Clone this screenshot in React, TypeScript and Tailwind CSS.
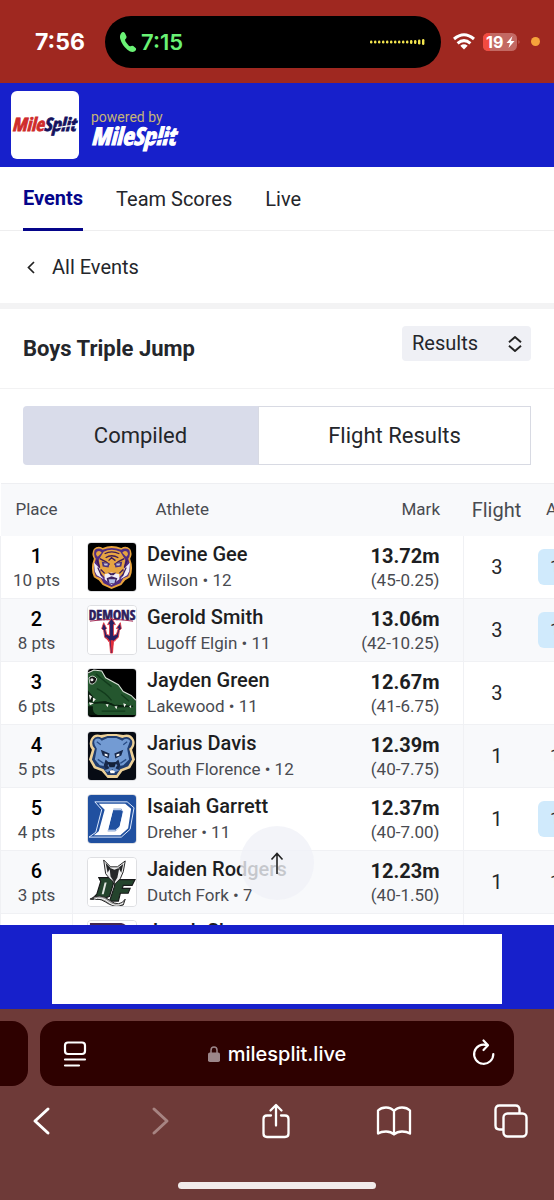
import type { ReactNode } from "react";

function SplitLogo({ size, w, h, left, right, cut, className }: { size: number; w: number; h: number; left: string; right: string; cut: string; className: string }) {
  return (
    <svg viewBox={`0 0 ${w} ${h}`} className={className} role="img" aria-label="MileSplit">
      <text x="0" y={size * 0.8} fontSize={size} fontWeight="700" fontStyle="italic" fontFamily="'Liberation Sans Narrow', 'Open Sans Condensed', Roboto, sans-serif" strokeWidth={size / 22}>
        <tspan fill={left} stroke={left}>Mile</tspan>
        <tspan fill={right} stroke={right}>Split</tspan>
      </text>
      <path d={`M${w * 0.66} ${size * 0.63} L${w * 0.86} ${size * 0.52} L${w} ${size * 0.5}`} stroke={cut} strokeWidth={size / 16} fill="none" />
    </svg>
  );
}

const Tiger = () => (
  <svg viewBox="0 0 49 49" className="size-full bg-black">
    <path d="M6 6Q10 2 15 5Q24 1 34 5Q39 2 43 6Q46 11 43 16Q47 26 43 35L38 38L34 43L24 47L15 43L11 38L6 35Q2 26 6 16Q3 11 6 6Z" fill="#e9a33c" />
    <path d="M7 7Q11 4 15 7Q24 3 34 7Q38 4 42 7Q44 12 41 16Q45 26 41 34L36 36L33 41L24 45L16 41L13 36L8 34Q4 26 8 16Q5 12 7 7Z" fill="#512d83" />
    <path d="M9 9Q12 7 14 10L10 14Q7 12 9 9ZM40 9Q37 7 35 10L39 14Q42 12 40 9ZM16 9Q24 5 33 9L38 17L36 31L31 36L24 40L18 36L13 31L11 17Z" fill="#e6a442" />
    <path d="M6 20L12 26L13 33L16 37L9 33L7 29ZM43 20L37 26L36 33L33 37L40 33L42 29ZM17 32L24 30L32 32L32 37L24 43L17 37Z" fill="#f2eef7" />
    <path d="M17 11Q24 7 32 11M18 15Q24 11 31 15M21 18L24 15L28 18M12 16L18 19L22 22M37 16L31 19L27 22M9 17L12 25M40 17L37 25M10 25L14 34M39 25L35 34M17 31L13 27M32 31L36 27" fill="none" stroke="#3d1a56" strokeWidth="1.3" />
    <path d="M14 19L22 21L21 25L15 24ZM35 19L27 21L28 25L34 24Z" fill="#49317c" />
    <path d="M16 21h4v2h-3zM33 21h-4v2h3z" fill="#c8c3d8" />
    <path d="M20 30L24 31L29 30L26 33H23Z" fill="#402462" />
    <path d="M19 36L24 34L30 36L28 41L24 42L20 40Z" fill="#402462" />
    <path d="M21 37h7l-1 4h-5z" fill="#b3c0e8" />
  </svg>
);

const Demons = () => (
  <svg viewBox="0 0 49 49" className="size-full bg-white">
    <text x="24.5" y="14" textAnchor="middle" fontSize="14" fontWeight="700" fontFamily="'Liberation Sans Narrow', 'Open Sans Condensed', Roboto, sans-serif" fill="#2d1c5c" stroke="#2d1c5c" strokeWidth=".6">DEMONS</text>
    <path d="M2 15.500Q24 12 46 15.500" stroke="#a32a55" fill="none" strokeWidth="1" />
    <path d="M24 12L28 19H26V30L29 29L31 23L29 23L33 17L34 23L32 25L31 32L26 36L25 48H23L22 36L17 32L16 25L14 23L16 17L19 23L18 24L19 29L22 30V19H20Z" fill="#252064" stroke="#e63a44" strokeWidth=".9" />
    <path d="M23 35h3l-1 12h-1zM18 31l4 4-1 2zM31 31l-4 4v2z" fill="#e52b38" />
  </svg>
);

const Gator = () => (
  <svg viewBox="0 0 49 49" className="size-full bg-black">
    <path d="M0 5L6 1L14 2L18 9L31 16L36 23L44 27L49 33V47H4L0 38Z" fill="#24562e" />
    <path d="M0 4L6 1L14 2L18 9L31 16L36 23L44 27L49 32" fill="none" stroke="#d9e1d8" strokeWidth="1.1" />
    <path d="M1 9Q5 5 9 10Q7 17 2 15Z" fill="#111" stroke="#cbd7cc" strokeWidth="1" />
    <circle cx="4" cy="11" r="1.6" fill="#eee" />
    <path d="M0 22L6 29L4 34L0 35ZM4 34L18 33L32 38L45 38M5 38Q4 45 10 47L0 47V38Z" fill="#081b0d" />
    <path d="M4 35L18 34L30 38.500L46 38" fill="none" stroke="#0b2412" strokeWidth="1.6" />
    <path d="M1 26l3 2-2 4zM5 29l3 2-3 3zM1 34l5 1-4 2zM18 36l2 3 1-3zM27 38l2 3 1-3zM36 35l1 4 2-3zM42 38l2 2v-3z" fill="#f4f4ef" />
    <path d="M8 5L14 10L24 18M9 20Q18 24 24 32M34 26L42 33M14 43H38" stroke="#123b1c" strokeWidth="1.4" fill="none" />
  </svg>
);

const Bear = () => (
  <svg viewBox="0 0 49 49" className="size-full bg-[#070b14]">
    <path d="M3 7Q6 1 13 3L20 2H29L36 3Q44 1 47 8Q49 13 45 18L48 28L43 37L35 40L30 47L20 47L14 40L6 37L1 28L4 18Q0 13 3 7Z" fill="#ecd098" />
    <path d="M5 8Q8 3 14 6L20 4H29L35 6Q42 3 45 9Q46 14 42 17L45 28L41 35L33 38L29 44H20L16 38L8 35L4 28L7 17Q3 14 5 8Z" fill="#203d70" />
    <path d="M7 8Q11 5 14 9L20 6H29L35 9Q39 5 43 9L40 17L42 28L36 34L30 35L24 32L18 35L12 34L7 28L9 17Q5 12 7 8Z" fill="#739bd3" />
    <path d="M13 18L22 22L21 27L15 24ZM36 18L27 22L28 27L34 24ZM18 28L16 34L19 40L25 43L30 40L33 34L31 28L28 31H21Z" fill="#18294b" />
    <path d="M17 22l3 1v2l-3-1zM32 22l-3 1v2l3-1zM22 39h6l-1 3h-4z" fill="#fff" />
    <path d="M20 34Q24 27 30 34L28 37L32 39L28 41L25 38L20 41L17 39L22 37Z" fill="#638bc5" />
    <path d="M20 31h9l-2 5h-5z" fill="#132039" />
    <path d="M9 10l4 3M40 10l-4 3M10 28l6 4M39 28l-6 4" stroke="#294c85" strokeWidth="1.4" />
  </svg>
);

const Dreher = () => (
  <svg viewBox="0 0 49 49" className="size-full bg-[#2050a0]">
    <path fillRule="evenodd" d="M7 7H40L47 13L43 35L34 43H1L8 38L14 15ZM25 15L20 36H28L33 32L36 17L34 15Z" fill="#2050a0" stroke="#e1edff" strokeWidth="1" />
    <path fillRule="evenodd" d="M11 9H38L44 14L41 34L33 41H6L11 37L17 15ZM26 14L20 37H28L32 33L36 17L34 14Z" fill="#fff" />
  </svg>
);

const DutchFork = () => (
  <svg viewBox="0 0 49 49" className="size-full bg-white">
    <path d="M11 20H24L26 26L22 39L15 42H4L9 37L13 24ZM28 22H48L45 28H36L35 31H43L41 36H33L31 44H22L27 29Z" fill="#24442d" stroke="#18191a" strokeWidth="1.2" />
    <path d="M17 25h2l-3 12h-2z" fill="#e1e6e1" />
    <path d="M16 2L23 9H30L38 3L36 14L33 21L28 26L22 21L18 16Z" fill="#eee" stroke="#222" strokeWidth="1" />
    <path d="M18 5L23 10L20 15ZM36 6L31 10L34 15ZM22 10L27 12L32 10L30 20L27 25L23 19Z" fill="#272829" />
    <path d="M2 42Q12 35 22 43T38 42L36 48Q26 51 18 45Q10 40 2 42Z" fill="#999" stroke="#292929" strokeWidth="1" />
    <path d="M6 42Q14 39 21 45T36 46" fill="none" stroke="#fff" />
  </svg>
);

const PurpleMark = () => (
  <svg viewBox="0 0 49 49" className="size-full bg-white">
    <path d="M2 2H34Q42 4 43 14V46H2Z" fill="#46294d" />
  </svg>
);

type Row = { place: number; pts: number; name: string; meta: string; mark: string; imperial: string; flight: string; attempt: string; best: boolean; logo: ReactNode };

const rows: Row[] = [
  { place: 1, pts: 10, name: "Devine Gee", meta: "Wilson • 12", mark: "13.72m", imperial: "(45-0.25)", flight: "3", attempt: "1", best: true, logo: <Tiger /> },
  { place: 2, pts: 8, name: "Gerold Smith", meta: "Lugoff Elgin • 11", mark: "13.06m", imperial: "(42-10.25)", flight: "3", attempt: "1", best: true, logo: <Demons /> },
  { place: 3, pts: 6, name: "Jayden Green", meta: "Lakewood • 11", mark: "12.67m", imperial: "(41-6.75)", flight: "3", attempt: "", best: false, logo: <Gator /> },
  { place: 4, pts: 5, name: "Jarius Davis", meta: "South Florence • 12", mark: "12.39m", imperial: "(40-7.75)", flight: "1", attempt: "1", best: false, logo: <Bear /> },
  { place: 5, pts: 4, name: "Isaiah Garrett", meta: "Dreher • 11", mark: "12.37m", imperial: "(40-7.00)", flight: "1", attempt: "1", best: true, logo: <Dreher /> },
  { place: 6, pts: 3, name: "Jaiden Rodgers", meta: "Dutch Fork • 7", mark: "12.23m", imperial: "(40-1.50)", flight: "1", attempt: "1", best: false, logo: <DutchFork /> },
];

const levels = [3, 3, 3, 3, 3, 3, 3, 3, 3, 3, 4, 4, 5, 6];

function StatusBar() {
  return (
    <div className="flex h-[83px] shrink-0 items-center bg-[#9f2820] pl-[35px] pr-3.5 font-['Inter',sans-serif] text-white">
      <span className="w-[70px] text-[23px] font-bold leading-7">7:56</span>
      <div className="flex h-[52px] flex-1 items-center rounded-full bg-black pl-3.5 pr-4">
        <svg viewBox="0 0 18 22" className="h-[22px] w-[18px]" fill="#6af275">
          <path d="M2 2.5Q4-.2 6 2.3L7.4 5.2Q8 6.8 6.3 8.3Q5.5 9.2 7.8 12.3Q10.2 15.8 11.5 15.3Q13 14.3 14.3 15.1L16.6 17Q18 18.5 15.8 20.3Q12.8 22.4 8.400 18.800Q3 14.300 1.200 7.800Q.5 4.400 2 2.500Z" />
        </svg>
        <span className="ml-1 text-[22px] font-semibold leading-7 text-[#6af275]">7:15</span>
        <svg viewBox="0 0 56 8" className="ml-auto h-2 w-14" fill="#f4e64f">
          {levels.map((h, i) => (
            <rect key={i} x={i * 4 + 1} y={4 - h / 2} width="2.4" height={h} rx="1.2" />
          ))}
        </svg>
      </div>
      <svg viewBox="0 0 22 17" className="ml-3 h-[17px] w-[22px]" fill="none" stroke="white" strokeWidth="3">
        <path d="M1 6Q11-2.5 21 6M4.6 10.400Q11 4.800 17.400 10.400" />
        <path d="M11 16.5L7.3 12.8Q11 9.9 14.7 12.8Z" fill="white" stroke="none" />
      </svg>
      <svg viewBox="0 0 38 20" className="ml-2 h-5 w-[38px]">
        <rect x="0" y="1" width="34" height="18" rx="5.5" fill="#c36963" />
        <path d="M6 1H7V19H6Q0 19 0 13.500V6.500Q0 1 6 1Z" fill="#f34b40" />
        <path d="M35.5 8q2 2 0 4z" fill="#c36963" />
        <text x="3" y="15.8" fill="white" fontSize="16" fontWeight="700" fontFamily="Inter, sans-serif">19</text>
        <path d="M29.5 4L23.5 11H27L25.5 16L31.5 9H28Z" fill="white" />
      </svg>
      <span className="ml-2.5 size-[9px] rounded-full bg-[#f6a33b]" />
    </div>
  );
}

const toolButton = "flex w-10 justify-center";

function BrowserBar() {
  return (
    <footer className="flex h-[191px] shrink-0 flex-col bg-[#6e3a38] pt-3 text-white">
      <div className="flex h-[65px] gap-3 pr-10">
        <div className="w-7 rounded-r-2xl bg-[#2e0100]" />
        <div className="flex flex-1 items-center rounded-2xl bg-[#2e0100] px-[22px]">
          <button aria-label="Page menu">
            <svg viewBox="0 0 26 28" className="h-7 w-[26px]" fill="none" stroke="white" strokeWidth="2.2" strokeLinecap="round">
              <rect x="3" y="2.5" width="20" height="11.5" rx="3" />
              <path d="M3 19.5H23M3 25.5H17" />
            </svg>
          </button>
          <div className="flex flex-1 items-center justify-center gap-2">
            <svg viewBox="0 0 12 16" className="h-4 w-3">
              <rect y="6.5" width="12" height="9.5" rx="1.8" fill="#9c8689" />
              <path d="M3 7V4.2Q3 1 6 1T9 4.2V7" fill="none" stroke="#9c8689" strokeWidth="1.5" />
            </svg>
            <span className="font-['Inter',sans-serif] text-[20px] font-medium leading-6">milesplit.live</span>
          </div>
          <button aria-label="Reload">
            <svg viewBox="-9 0 26 28" className="h-7 w-[26px] overflow-visible" fill="none" stroke="white" strokeWidth="2.2" strokeLinecap="round" strokeLinejoin="round">
              <path d="M12 5.2A9.600 9.600 0 1 0 18.300 14M8.500 .5L13 5.200L8.500 10" />
            </svg>
          </button>
        </div>
      </div>
      <div className="flex h-[70px] items-center justify-between pl-[21px] pr-[23px]">
        <button aria-label="Back" className={toolButton}>
          <svg viewBox="0 0 30 30" className="size-[30px]" fill="none" stroke="white" strokeWidth="3" strokeLinecap="round" strokeLinejoin="round"><path d="M22 3L9 15L22 27" /></svg>
        </button>
        <button aria-label="Forward" className={toolButton}>
          <svg viewBox="0 0 30 30" className="size-[30px]" fill="none" stroke="#a78482" strokeWidth="3" strokeLinecap="round" strokeLinejoin="round"><path d="M10 3L23 15L10 27" /></svg>
        </button>
        <button aria-label="Share" className={toolButton}>
          <svg viewBox="0 0 30 36" className="h-9 w-[30px]" fill="none" stroke="white" strokeWidth="2.3" strokeLinecap="round" strokeLinejoin="round">
            <path d="M10 12.5H6Q2.5 12.5 2.5 16V30.5Q2.5 34 6 34H24Q27.500 34 27.500 30.500V16Q27.500 12.500 24 12.500H20M15 22.500V2.500M9.500 7.500L15 2L20.500 7.500" />
          </svg>
        </button>
        <button aria-label="Bookmarks" className={toolButton}>
          <svg viewBox="0 0 36 30" className="h-[30px] w-9" fill="none" stroke="white" strokeWidth="2.3" strokeLinecap="round" strokeLinejoin="round">
            <path d="M18 5Q15 1.500 10 1.500Q5 1.500 2 4.500V27.500Q5 25.500 10 25.500Q15 25.500 18 28.500Q21 25.500 26 25.500Q31 25.500 34 27.500V4.500Q31 1.500 26 1.500Q21 1.500 18 5V28" />
          </svg>
        </button>
        <button aria-label="Tabs" className={toolButton}>
          <svg viewBox="0 0 34 34" className="size-[34px]" fill="none" stroke="white" strokeWidth="2.4" strokeLinejoin="round">
            <rect x="9.5" y="9.5" width="23" height="23" rx="4" />
            <path d="M25.5 9V5.500Q25.500 1.500 21.500 1.500H5.500Q1.500 1.500 1.500 5.500V21.500Q1.500 25.500 5.500 25.500H9" />
          </svg>
        </button>
      </div>
      <div className="mx-auto mb-[11px] mt-auto h-[7px] w-[198px] rounded-full bg-[#f1ebeb]" />
    </footer>
  );
}

export default function App() {
  return (
    <div className="flex h-screen flex-col overflow-hidden bg-white font-['Roboto',sans-serif] text-[#24262b]">
      <StatusBar />
      <header className="flex h-[84px] shrink-0 items-center gap-3 bg-[#1720cb] px-[11px]">
        <div className="flex size-[68px] items-center justify-center rounded-md bg-white">
          <SplitLogo size={19} w={68} h={19} left="#cf2b2b" right="#15125e" cut="#fff" className="h-[19px] w-[66px] overflow-visible" />
        </div>
        <div className="flex flex-col pt-2.5">
          <span className="text-[14px] leading-4 text-[#c5b477]">powered by</span>
          <SplitLogo size={25} w={90} h={26} left="#fff" right="#fff" cut="#1720cb" className="h-[26px] w-[88px] overflow-visible" />
        </div>
      </header>
      <nav className="flex h-16 shrink-0 gap-[33px] border-b border-[#eeeeef] px-[23px] text-[20px]">
        <a href="#events" className="-mb-px flex items-center border-b-[3px] border-[#05058a] font-bold text-[#05058a]">Events</a>
        <a href="#scores" className="flex items-center">Team Scores</a>
        <a href="#live" className="flex items-center">Live</a>
      </nav>
      <div className="flex h-[78px] shrink-0 items-center border-b-[6px] border-[#f3f3f4] px-[23px]">
        <a href="#all" className="flex items-center gap-3 text-[20px] leading-7">
          <svg viewBox="0 0 17 14" className="h-3.5 w-[17px]" fill="none" stroke="#222" strokeWidth="1.7"><path d="M11 2L5.500 7.500L11 13" /></svg>
          All Events
        </a>
      </div>
      <div className="flex h-20 shrink-0 items-center justify-between border-b border-[#f2f2f3] px-[23px]">
        <h1 className="text-[22px] font-bold leading-7">Boys Triple Jump</h1>
        <div className="relative mb-2.5">
          <select aria-label="View" className="h-[35px] w-[129px] appearance-none rounded bg-[#eff0f5] pb-0.5 pl-2.5 text-[20px] leading-6 text-[#24262b]">
            <option>Results</option>
          </select>
          <svg viewBox="0 0 14 16" className="pointer-events-none absolute right-[9px] top-2.5 h-4 w-3.5" fill="none" stroke="#222" strokeWidth="1.9" strokeLinejoin="round"><path d="M1 6.200L7 1L13 6.200M1 9.800L7 15L13 9.800" /></svg>
        </div>
      </div>
      <div className="flex shrink-0 px-[23px] pb-[18px] pt-[17px] text-[22px]">
        <button className="h-[59px] w-[235px] rounded-l bg-[#d9dcea]">Compiled</button>
        <button className="h-[59px] flex-1 border border-[#d8dae3] bg-white">Flight Results</button>
      </div>
      <main className="relative min-h-0 flex-1 overflow-hidden">
        <table className="w-[calc(100%+40px)] table-fixed border-collapse">
          <colgroup>
            <col className="w-[72px]" />
            <col />
            <col className="w-[124px]" />
            <col className="w-[67px]" />
            <col className="w-16" />
          </colgroup>
          <thead>
            <tr className="h-[52px] border-t border-[#eeeff2] bg-[#f8f9fb] text-[17px] text-[#494b51]">
              <th className="font-normal">Place</th>
              <th className="pl-[83px] text-left font-normal">Athlete</th>
              <th className="pr-[23px] text-right font-normal">Mark</th>
              <th className="text-[20px] font-normal">Flight</th>
              <th className="pl-4 text-left font-normal">A</th>
            </tr>
          </thead>
          <tbody>
            {rows.map((r) => (
              <tr key={r.place} className="h-[63px] border-b border-[#f0f1f4] odd:bg-white even:bg-[#f8f9fb]">
                <td className="border-x border-[#f0f1f4] pt-0.5 text-center">
                  <div className="text-[20px] font-medium leading-6 text-black">{r.place}</div>
                  <div className="text-[17px] leading-6 text-[#494b51]">{r.pts} pts</div>
                </td>
                <td>
                  <div className="flex items-center gap-2.5 pl-3.5">
                    <div className="size-[50px] shrink-0 overflow-hidden rounded border border-[#dedfe2]">{r.logo}</div>
                    <div className="whitespace-nowrap">
                      <div className="text-[20px] font-medium leading-[26px] text-[#1d1e22]">{r.name}</div>
                      <div className="text-[17px] leading-[26px] text-[#494b51]">{r.meta}</div>
                    </div>
                  </div>
                </td>
                <td className="border-r border-[#f0f1f4] pr-[23px] pt-0.5 text-right">
                  <div className="text-[20px] font-bold leading-6 text-[#1d1e22]">{r.mark}</div>
                  <div className="text-[17px] leading-6 text-[#494b51]">{r.imperial}</div>
                </td>
                <td className="text-center text-[20px]">{r.flight}</td>
                <td className="pl-2">
                  <div className={r.best ? "flex h-9 items-center rounded-md bg-[#d0eafc] pl-3 text-[17px]" : "flex h-9 items-center pl-3 text-[17px]"}>{r.attempt}</div>
                </td>
              </tr>
            ))}
            <tr className="h-[63px] bg-white">
              <td className="border-x border-[#f0f1f4]" />
              <td>
                <div className="flex items-center gap-2.5 pl-3.5">
                  <div className="size-[50px] shrink-0 overflow-hidden rounded border border-[#dedfe2]"><PurpleMark /></div>
                  <div className="pb-7 text-[20px] font-medium leading-[26px] text-[#1d1e22]">Jacob Sh</div>
                </div>
              </td>
              <td className="border-r border-[#f0f1f4]" />
              <td />
              <td />
            </tr>
          </tbody>
        </table>
        <button aria-label="Scroll to top" className="absolute bottom-[25px] left-1/2 flex size-[74px] -translate-x-1/2 items-center justify-center rounded-full bg-[#f0f1f7]/80">
          <svg viewBox="0 0 14 22" className="h-[22px] w-3.5" fill="none" stroke="#222" strokeWidth="1.6"><path d="M7 22V2M1.500 7.500L7 1.500L12.500 7.500" /></svg>
        </button>
      </main>
      <div className="flex h-[84px] shrink-0 bg-[#1720cb] px-[52px] pb-[5px] pt-[9px]">
        <div className="flex-1 bg-white" />
      </div>
      <BrowserBar />
    </div>
  );
}
